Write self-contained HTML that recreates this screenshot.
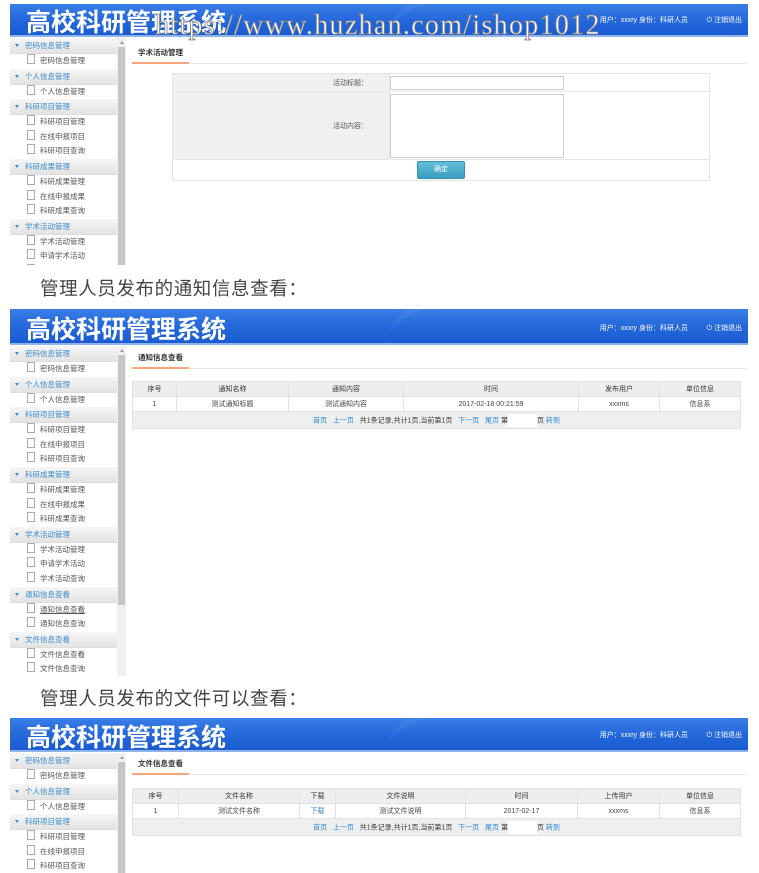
<!DOCTYPE html>
<html><head><meta charset="utf-8">
<style>
*{margin:0;padding:0;box-sizing:border-box}
body{width:759px;height:873px;background:#fff;position:relative;overflow:hidden;font-family:"Liberation Sans","Noto Sans CJK SC",sans-serif;}
.frame{position:absolute;left:10px;width:738px;overflow:hidden;background:#fff}
.hd{position:absolute;left:0;top:0;width:738px;background:linear-gradient(180deg,#3a7ee6 0%,#2468db 50%,#1a5bd2 100%);border-bottom:2px solid #8fb4ea;overflow:hidden}
.hd .t{position:absolute;left:16px;color:#fff;font-weight:bold;font-size:25px;font-family:"Noto Sans CJK SC",sans-serif}
.hd .sw{position:absolute;right:-60px;top:-40px;width:420px;height:140px;border-radius:50%;border-top:18px solid rgba(255,255,255,0.05)}
.hd .u{position:absolute;right:60px;color:#fff;font-size:7px}
.hd .o{position:absolute;right:6px;color:#fff;font-size:7px}
.sb{position:absolute;left:0;width:107px}
.g{height:16px;background:linear-gradient(#f6f6f6,#e3e3e3);border-bottom:1px solid #ddd;font-size:7.5px;color:#3d8ccf;line-height:16px;padding-left:5px;white-space:nowrap}
.g:before{content:"";display:inline-block;border-left:2.5px solid transparent;border-right:2.5px solid transparent;border-top:3px solid #3d8ccf;margin-right:6px;vertical-align:1px}
.i{height:14.6px;font-size:7.5px;color:#555;line-height:14.6px;padding-left:17px;background:#fff;white-space:nowrap}
.i:before{content:"";display:inline-block;width:6px;height:8px;border:1px solid #aaa;margin-right:5px;vertical-align:-1px}
.scr{position:absolute;left:107px;width:9px;background:#f0f0f0}
.scr .th{position:absolute;left:1px;width:7px;top:9px;background:#c6c6c6}
.scr .ar{position:absolute;left:2.5px;top:3px;border-left:2px solid transparent;border-right:2px solid transparent;border-bottom:3px solid #999}
.tab{position:absolute;left:122px;width:614px;height:20px;border-bottom:1px solid #e6e6e6;font-size:7.5px;color:#333;font-weight:bold}
.tab span{display:inline-block;height:20px;line-height:18px;padding:0 6px;border-bottom:2px solid #f7a57a;white-space:nowrap}
table{border-collapse:collapse;position:absolute;font-size:7px;color:#444;text-align:center}
td,th{border:1px solid #e2e2e2;font-weight:normal}
.tb th{background:#eeeeee;height:15px;color:#333}
.tb td{height:15px;background:#fff}
.tb .pg td{background:#efefef;height:17px;color:#333}
.pg a{color:#2a86d0;text-decoration:none}
.pg .bx{display:inline-block;width:29px;height:13px;background:#fff;vertical-align:middle}
.cap{position:absolute;left:40px;font-size:18.5px;color:#444;letter-spacing:0.6px;font-family:"Noto Sans CJK SC",sans-serif}
.wm{position:absolute;left:155px;top:10px;font-family:"Liberation Serif",serif;font-size:28px;letter-spacing:1.3px;color:#fff;-webkit-text-stroke:0.8px #888;white-space:nowrap}
</style></head><body>

<div class="frame" style="top:4px;height:261px">
  <div class="hd" style="height:33px"><div class="sw"></div><div class="t" style="top:-1px">高校科研管理系统</div><div class="u" style="top:11px">用户：xxxry 身份：科研人员</div><div class="o" style="top:11px">⏻ 注销退出</div></div>
  <div class="sb" style="top:34px">
    <div class="g">密码信息管理</div><div class="i">密码信息管理</div>
    <div class="g">个人信息管理</div><div class="i">个人信息管理</div>
    <div class="g">科研项目管理</div><div class="i">科研项目管理</div><div class="i">在线申报项目</div><div class="i">科研项目查询</div>
    <div class="g">科研成果管理</div><div class="i">科研成果管理</div><div class="i">在线申报成果</div><div class="i">科研成果查询</div>
    <div class="g">学术活动管理</div><div class="i">学术活动管理</div><div class="i">申请学术活动</div><div class="i">学术活动查询</div>
  </div>
  <div class="scr" style="top:34px;height:227px"><div class="ar"></div><div class="th" style="height:220px"></div></div>
  <div class="tab" style="top:40px"><span>学术活动管理</span></div>
  <div style="position:absolute;left:162px;top:69px;width:538px;height:108px;border:1px solid #e4e4e4">
    <div style="position:absolute;left:0;top:0;width:216px;height:85px;background:#f0f0f0"></div>
    <div style="position:absolute;left:0;top:17px;width:536px;height:1px;background:#e6e6e6"></div>
    <div style="position:absolute;left:0;top:85px;width:536px;height:1px;background:#e6e6e6"></div>
    <div style="position:absolute;left:216px;top:0;width:1px;height:85px;background:#e6e6e6"></div>
    <div style="position:absolute;left:160px;top:4px;font-size:7px;color:#555">活动标题：</div>
    <div style="position:absolute;left:160px;top:47px;font-size:7px;color:#555">活动内容：</div>
    <div style="position:absolute;left:217px;top:2px;width:174px;height:14px;border:1px solid #ccc;background:#fff"></div>
    <div style="position:absolute;left:217px;top:20px;width:174px;height:64px;border:1px solid #ccc;background:#fff"></div>
    <div style="position:absolute;left:244px;top:87px;width:48px;height:18px;background:linear-gradient(#63c0dc,#3a9dc0);border:1px solid #3591b3;border-radius:2px;color:#fff;font-size:7px;line-height:16px;text-align:center">确定</div>
  </div>
</div>
<div class="wm">https://www.huzhan.com/ishop1012</div>

<div class="cap" style="top:275px">管理人员发布的通知信息查看：</div>

<div class="frame" style="top:309px;height:367px">
  <div class="hd" style="height:36px"><div class="sw"></div><div class="t" style="top:1px">高校科研管理系统</div><div class="u" style="top:14px">用户：xxxry 身份：科研人员</div><div class="o" style="top:14px">⏻ 注销退出</div></div>
  <div class="sb" style="top:37px">
    <div class="g">密码信息管理</div><div class="i">密码信息管理</div>
    <div class="g">个人信息管理</div><div class="i">个人信息管理</div>
    <div class="g">科研项目管理</div><div class="i">科研项目管理</div><div class="i">在线申报项目</div><div class="i">科研项目查询</div>
    <div class="g">科研成果管理</div><div class="i">科研成果管理</div><div class="i">在线申报成果</div><div class="i">科研成果查询</div>
    <div class="g">学术活动管理</div><div class="i">学术活动管理</div><div class="i">申请学术活动</div><div class="i">学术活动查询</div>
    <div class="g">通知信息查看</div><div class="i" style="text-decoration:underline">通知信息查看</div><div class="i">通知信息查询</div>
    <div class="g">文件信息查看</div><div class="i">文件信息查看</div><div class="i">文件信息查询</div>
  </div>
  <div class="scr" style="top:37px;height:330px"><div class="ar"></div><div class="th" style="height:250px"></div></div>
  <div class="tab" style="top:40px"><span>通知信息查看</span></div>
  <table class="tb" style="left:122px;top:72px;width:609px">
    <tr><th style="width:44px">序号</th><th style="width:112px">通知名称</th><th style="width:115px">通知内容</th><th style="width:175px">时间</th><th style="width:81px">发布用户</th><th>单位信息</th></tr>
    <tr><td>1</td><td>测试通知标题</td><td>测试通知内容</td><td>2017-02-18 00:21:59</td><td>xxxms</td><td>信息系</td></tr>
    <tr class="pg"><td colspan="6"><a>首页</a>&nbsp;&nbsp; <a>上一页</a>&nbsp;&nbsp; 共1条记录,共计1页,当前第1页 &nbsp;&nbsp;<a>下一页</a>&nbsp;&nbsp; <a>尾页</a> 第<span class="bx"></span>页 <a>转到</a></td></tr>
  </table>
</div>

<div class="cap" style="top:685px">管理人员发布的文件可以查看：</div>

<div class="frame" style="top:718px;height:155px">
  <div class="hd" style="height:34px"><div class="sw"></div><div class="t" style="top:0px">高校科研管理系统</div><div class="u" style="top:12px">用户：xxxry 身份：科研人员</div><div class="o" style="top:12px">⏻ 注销退出</div></div>
  <div class="sb" style="top:35px">
    <div class="g">密码信息管理</div><div class="i">密码信息管理</div>
    <div class="g">个人信息管理</div><div class="i">个人信息管理</div>
    <div class="g">科研项目管理</div><div class="i">科研项目管理</div><div class="i">在线申报项目</div><div class="i">科研项目查询</div>
  </div>
  <div class="scr" style="top:35px;height:120px"><div class="ar"></div><div class="th" style="height:120px"></div></div>
  <div class="tab" style="top:37px"><span>文件信息查看</span></div>
  <table class="tb" style="left:122px;top:70px;width:609px">
    <tr><th style="width:46px">序号</th><th style="width:121px">文件名称</th><th style="width:36px">下载</th><th style="width:130px">文件说明</th><th style="width:112px">时间</th><th style="width:82px">上传用户</th><th>单位信息</th></tr>
    <tr><td>1</td><td>测试文件名称</td><td style="color:#2a86d0">下载</td><td>测试文件说明</td><td>2017-02-17</td><td>xxxms</td><td>信息系</td></tr>
    <tr class="pg"><td colspan="7"><a>首页</a>&nbsp;&nbsp; <a>上一页</a>&nbsp;&nbsp; 共1条记录,共计1页,当前第1页 &nbsp;&nbsp;<a>下一页</a>&nbsp;&nbsp; <a>尾页</a> 第<span class="bx"></span>页 <a>转到</a></td></tr>
  </table>
</div>
</body></html>
